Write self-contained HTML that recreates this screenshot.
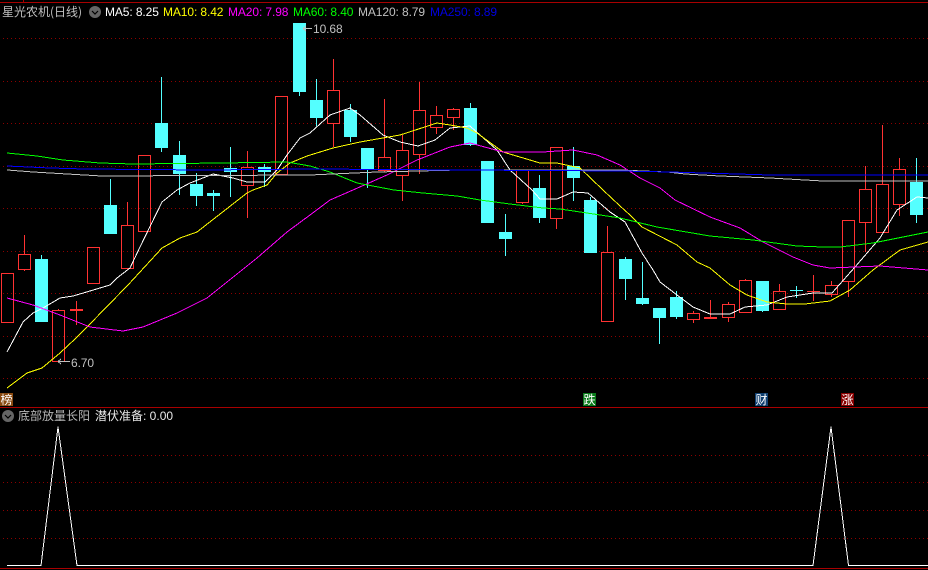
<!DOCTYPE html>
<html><head><meta charset="utf-8"><style>
html,body{margin:0;padding:0;background:#000;width:928px;height:570px;overflow:hidden}
#c{position:relative;width:928px;height:570px;background:#000;overflow:hidden}
svg{position:absolute;left:0;top:0}
.t{position:absolute;white-space:nowrap;font:12px/14px "Liberation Sans","WenQuanYi Zen Hei",sans-serif;letter-spacing:-.1px}
.z{font-family:"WenQuanYi Zen Hei","Noto Sans CJK SC",sans-serif;letter-spacing:0}
.b{position:absolute;width:13px;height:13px;color:#fff;font:12px/13px "WenQuanYi Zen Hei","Noto Sans CJK SC",sans-serif;text-align:center}
</style></head><body><div id="c">
<svg width="928" height="570" viewBox="0 0 928 570">
<g stroke="#8c0000" stroke-width="1" stroke-dasharray="1 3" shape-rendering="crispEdges" fill="none">
<path d="M3 38.5H928M3 81.5H928M3 123.5H928M3 166.5H928M3 208.5H928M3 251.5H928M3 293.5H928M3 336.5H928M3 378.5H928M3 455.5H928M3 482.5H928M3 510.5H928M3 538.5H928"/>
</g>
<g fill="#a80000" shape-rendering="crispEdges">
<rect x="0" y="2" width="928" height="1"/><rect x="23" y="0" width="1" height="2"/>
<rect x="0" y="407" width="928" height="1"/><rect x="0" y="568" width="928" height="1"/>
</g>
<g fill="none" stroke="#ff3232" stroke-width="1" shape-rendering="crispEdges">
<path d="M1.5 273.5h12v49h-12z M18.5 254.5h12v15h-12z M52.5 310.5h12v51h-12z M87.5 247.5h12v36h-12z M121.5 225.5h12v43h-12z M138.5 155.5h12v76h-12z M241.5 167.5h12v18h-12z M275.5 96.5h12v78h-12z M327.5 90.5h12v33h-12z M378.5 157.5h12v13h-12z M396.5 150.5h12v25h-12z M413.5 110.5h12v44h-12z M430.5 115.5h12v12h-12z M447.5 109.5h12v8h-12z M516.5 170.5h12v32h-12z M550.5 147.5h12v71h-12z M601.5 252.5h12v69h-12z M687.5 313.5h12v6h-12z M722.5 304.5h12v13h-12z M739.5 280.5h12v32h-12z M773.5 291.5h12v18h-12z M825.5 285.5h12v9h-12z M842.5 220.5h12v61h-12z M859.5 189.5h12v33h-12z M876.5 184.5h12v48h-12z M893.5 169.5h12v35h-12z"/>
<path d="M24.5 235V254M24.5 270V271M58.5 309V310M76.5 301V325M127.5 202V225M247.5 151V167M247.5 186V218M333.5 59V90M333.5 124V147M384.5 99V157M384.5 171V172M402.5 135V150M402.5 176V201M419.5 82V110M419.5 155V174M436.5 106V115M436.5 128V134M453.5 108V109M453.5 118V130M522.5 203V204M556.5 219V229M607.5 226V252M693.5 311V313M693.5 320V323M710.5 300V317M728.5 302V304M728.5 318V322M745.5 279V280M779.5 284V291M813.5 275V301M831.5 281V285M831.5 295V297M848.5 282V297M865.5 166V189M865.5 223V252M882.5 125V184M899.5 158V169M899.5 205V216"/>
</g>
<g fill="#ff3232" shape-rendering="crispEdges"><rect x="70" y="309" width="13" height="2"/><rect x="704" y="317" width="13" height="2"/><rect x="807" y="291" width="13" height="1"/></g>
<g fill="none" stroke="#54ffff" stroke-width="1" shape-rendering="crispEdges">
<path d="M41.5 255V259M110.5 179V205M161.5 77V152M179.5 141V195M196.5 173V206M213.5 190V211M230.5 147V197M264.5 164V187M299.5 92V96M316.5 79V126M350.5 104V142M367.5 169V188M470.5 103V146M505.5 214V256M539.5 175V223M573.5 147V201M590.5 197V200M625.5 257V300M642.5 262V305M659.5 318V344M676.5 291V319M762.5 311V312M796.5 286V298M916.5 158V223"/>
</g>
<g fill="#54ffff" shape-rendering="crispEdges">
<rect x="35" y="259" width="13" height="63"/><rect x="104" y="205" width="13" height="29"/><rect x="155" y="123" width="13" height="25"/><rect x="173" y="155" width="13" height="19"/><rect x="190" y="184" width="13" height="12"/><rect x="207" y="193" width="13" height="3"/><rect x="224" y="168" width="13" height="4"/><rect x="258" y="167" width="13" height="5"/><rect x="293" y="23" width="13" height="69"/><rect x="310" y="100" width="13" height="18"/><rect x="344" y="110" width="13" height="27"/><rect x="361" y="148" width="13" height="21"/><rect x="464" y="108" width="13" height="37"/><rect x="481" y="161" width="13" height="62"/><rect x="499" y="232" width="13" height="7"/><rect x="533" y="188" width="13" height="30"/><rect x="567" y="166" width="13" height="12"/><rect x="584" y="200" width="13" height="53"/><rect x="619" y="259" width="13" height="20"/><rect x="636" y="298" width="13" height="6"/><rect x="653" y="308" width="13" height="10"/><rect x="670" y="297" width="13" height="20"/><rect x="756" y="281" width="13" height="30"/><rect x="790" y="290" width="13" height="1"/><rect x="910" y="182" width="13" height="33"/>
</g>
<g fill="none" stroke-width="1" stroke-linejoin="round" shape-rendering="crispEdges">
<polyline stroke="#ffffff" points="7,352 23,322 33,313 43,308 60,298 73,296 90,291 110,285 117,278 130,268 140,247 162,202 177,190 190,183 213,174 233,178 247,182 265,182 277,170 287,155 300,138 310,133 330,115 350,108 360,115 383,135 400,142 418,146 435,140 450,128 470,126 480,135 497,150 510,170 532,190 540,199 557,199 573,192 588,193 610,212 625,222 642,253 653,270 660,282 677,295 693,307 710,314 730,314 745,307 767,305 787,297 813,293 832,293 855,267 880,238 897,210 917,197 928,198"/>
<polyline stroke="#ffff00" points="7,388 27,373 42,368 60,353 75,339 87,327 128,285 162,248 180,238 197,232 247,193 253,190 267,185 277,173 290,163 307,156 333,148 360,142 400,135 437,123 450,125 467,128 477,133 503,152 540,163 557,163 580,168 603,190 620,206 630,215 642,227 677,245 697,262 710,268 730,285 747,295 767,302 787,304 805,304 830,301 850,290 873,270 900,250 928,242"/>
<polyline stroke="#ff00ff" points="7,298 33,305 60,315 90,327 123,331 143,327 177,313 207,298 257,258 287,232 310,215 330,200 353,190 387,175 417,160 450,147 470,143 503,152 543,152 573,150 597,155 620,165 640,178 660,188 675,200 710,217 740,228 763,242 793,257 813,265 830,268 880,266 928,270"/>
<polyline stroke="#00ff00" points="7,153 37,156 63,160 100,163 133,164 222,163 287,162 310,166 330,172 357,183 394,190 423,193 457,196 480,200 510,204 543,208 560,209 587,213 620,218 657,227 710,236 753,240 797,246 823,247 840,247 873,243 928,232"/>
<polyline stroke="#c0c0c0" points="7,170 33,172 67,174 102,176 310,175 377,172 460,170 620,170 667,172 685,174 720,176 770,178 805,180 823,181 928,181"/>
<polyline stroke="#0000ff" points="7,166 50,168 85,169 205,170 310,169 620,171 670,172 703,173 737,174 770,175 928,175"/>
<path stroke="#ffffff" d="M7 565.5H41L58 427L77 565.5H813L831 427L848.5 565.5H928"/>
<path stroke="#c0c0c0" d="M303 28.5H312M303 28.5L306 26M303 28.5L306 31M58 361.5H70M58 361.5L61 359M58 361.5L61 364"/>
</g>
<circle cx="95" cy="12" r="6" fill="#666"/><path d="M92 11l3 3 3-3" fill="none" stroke="#000" stroke-width="1.2"/>
<circle cx="8" cy="416" r="6" fill="#666"/><path d="M5 415l3 3 3-3" fill="none" stroke="#000" stroke-width="1.2"/>
</svg>
<div class="t z" style="left:2px;top:5px;color:#c0c0c0">星光农机(日线)</div>
<div class="t" style="left:105px;top:5px;color:#fff">MA5: 8.25</div>
<div class="t" style="left:163px;top:5px;color:#ff0">MA10: 8.42</div>
<div class="t" style="left:228px;top:5px;color:#f0f">MA20: 7.98</div>
<div class="t" style="left:293px;top:5px;color:#0f0">MA60: 8.40</div>
<div class="t" style="left:358px;top:5px;color:#c0c0c0">MA120: 8.79</div>
<div class="t" style="left:430px;top:5px;color:#0000e0">MA250: 8.89</div>
<div class="t" style="left:313px;top:22px;color:#c0c0c0">10.68</div>
<div class="t" style="left:71px;top:356px;color:#c0c0c0">6.70</div>
<div class="t z" style="left:18px;top:409px;color:#b8b8b8">底部放量长阳</div>
<div class="t z" style="left:95px;top:409px;color:#e8e8e8">潜伏准备<span style="font-family:'Liberation Sans'">: 0.00</span></div>
<div class="b" style="left:0;top:393px;background:#8a4a10">榜</div>
<div class="b" style="left:583px;top:393px;background:#0a7a1a">跌</div>
<div class="b" style="left:755px;top:393px;background:#104070">财</div>
<div class="b" style="left:841px;top:393px;background:#880000">涨</div>
</div></body></html>
